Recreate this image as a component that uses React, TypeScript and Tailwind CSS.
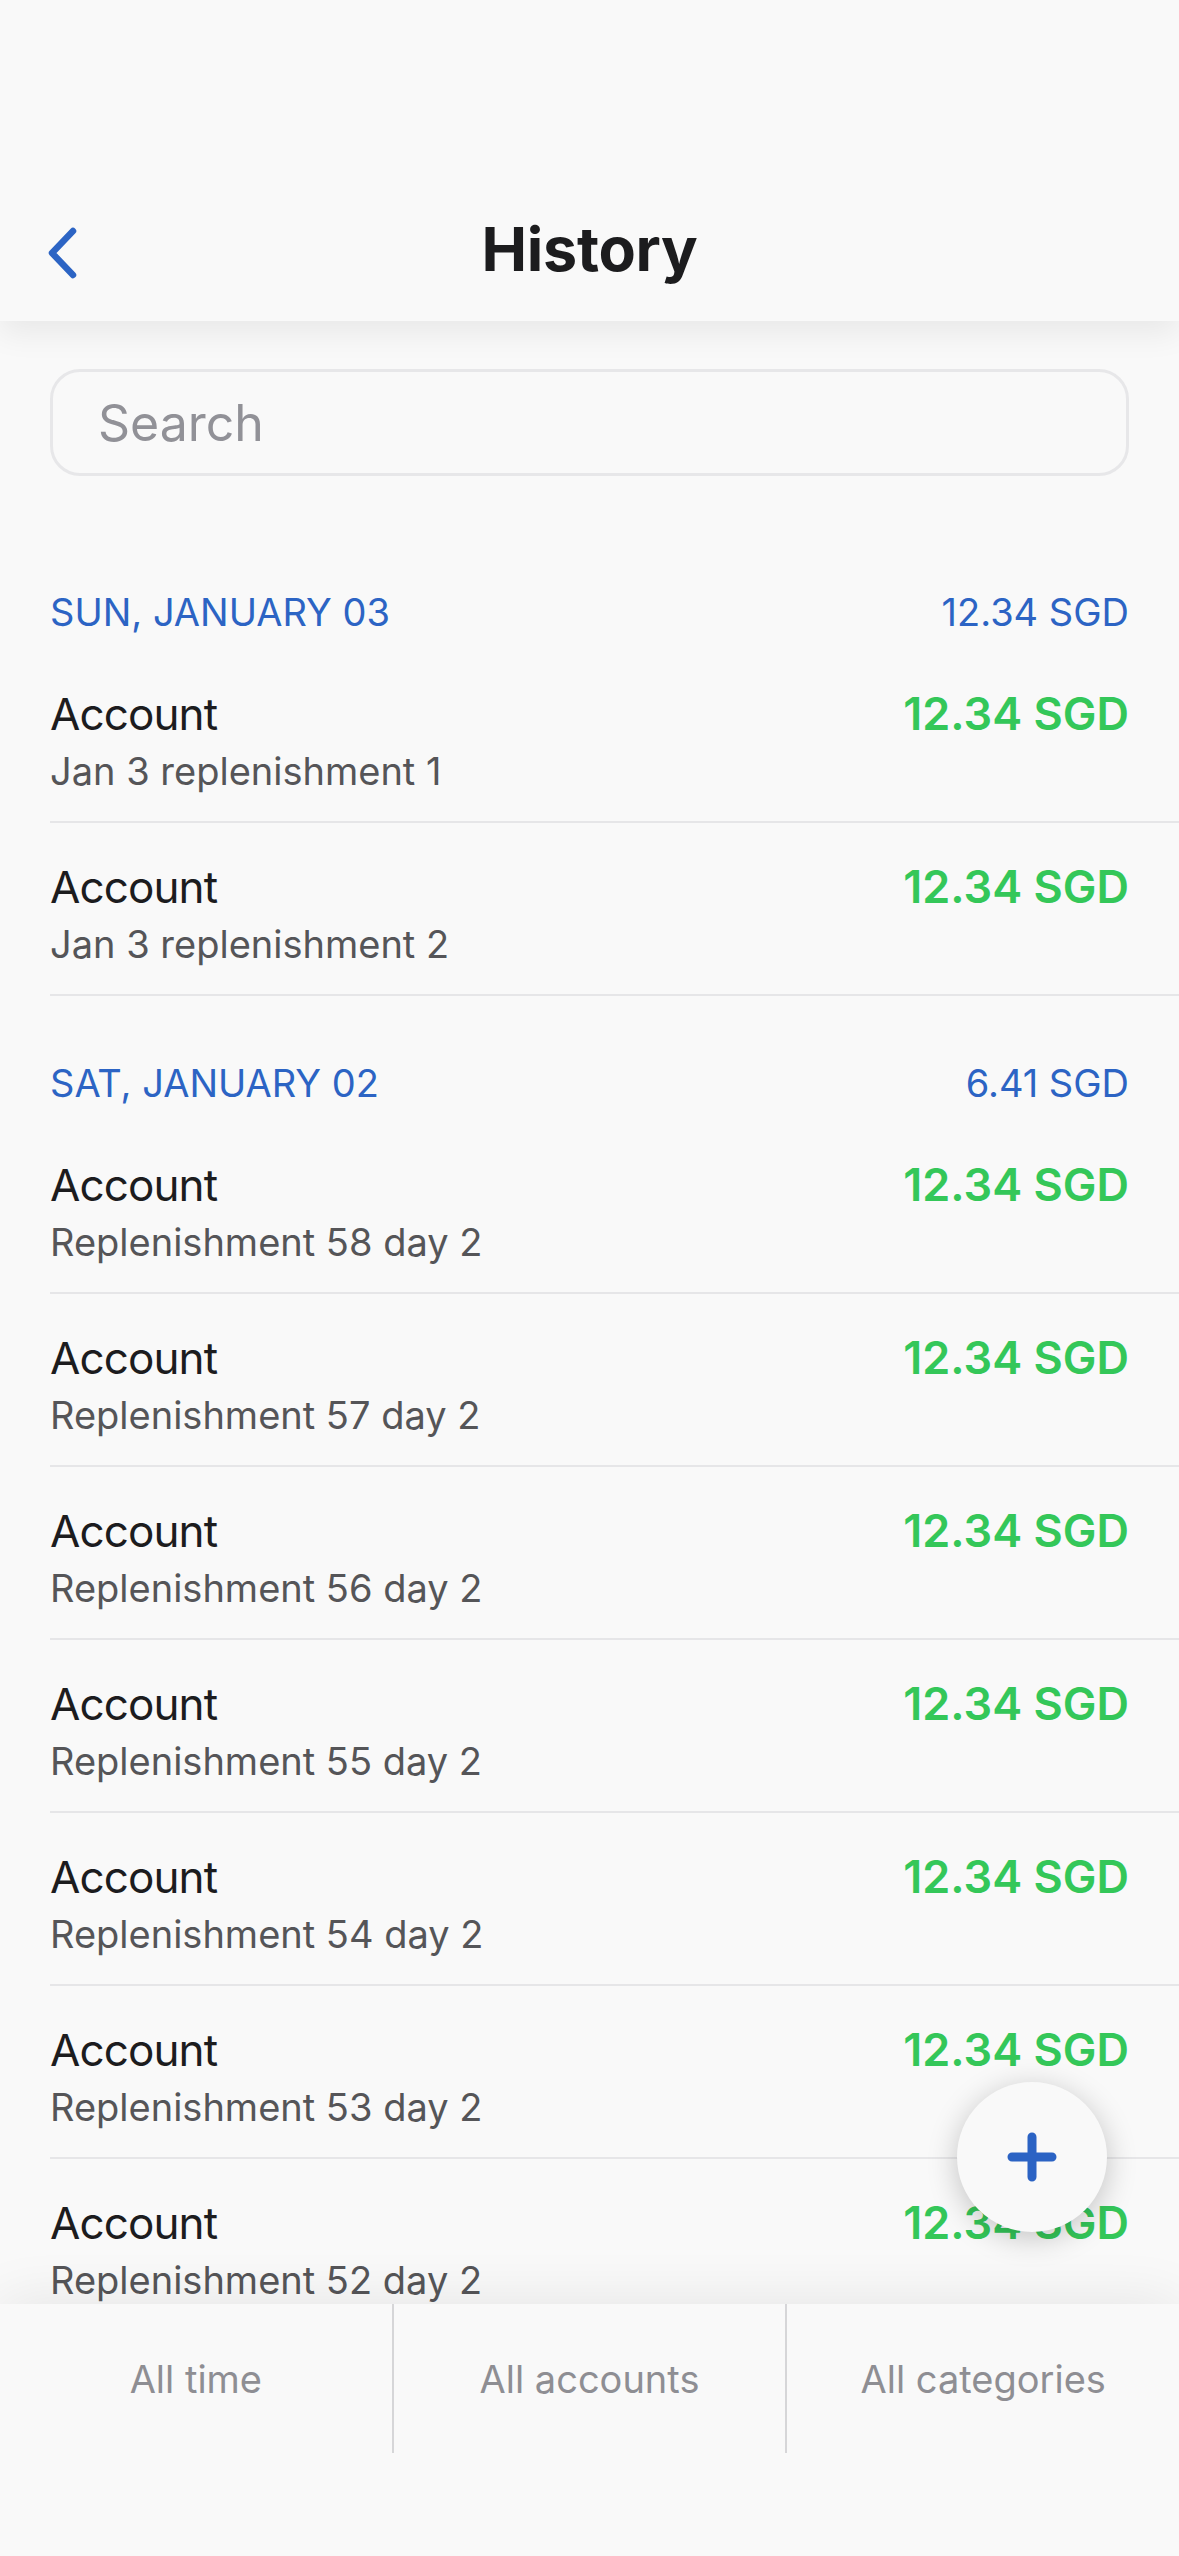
type Entry = {
  account: string
  note: string
  amount: string
}

type Section = {
  date: string
  total: string
  entries: Entry[]
}

const sections: Section[] = [
  {
    date: "SUN, JANUARY 03",
    total: "12.34 SGD",
    entries: [
      { account: "Account", note: "Jan 3 replenishment 1", amount: "12.34 SGD" },
      { account: "Account", note: "Jan 3 replenishment 2", amount: "12.34 SGD" },
    ],
  },
  {
    date: "SAT, JANUARY 02",
    total: "6.41 SGD",
    entries: [58, 57, 56, 55, 54, 53, 52, 51, 50].map((n) => ({
      account: "Account",
      note: `Replenishment ${n} day 2`,
      amount: "12.34 SGD",
    })),
  },
]

const filters = ["All time", "All accounts", "All categories"]

function Row({ entry }: { entry: Entry }) {
  return (
    <div className="ml-[50px] border-b-2 border-[#e6e6e8] pt-[37px] pb-[27px] pr-[50px]">
      <div className="flex items-start justify-between">
        <div className="flex flex-col gap-[7px]">
          <span className="text-[44px] leading-[54px] tracking-[-0.9px] text-[#1c1c1e]">{entry.account}</span>
          <span className="text-[38px] leading-[46px] text-[#555558]">{entry.note}</span>
        </div>
        <span className="text-[45px] font-semibold leading-[54px] text-[#34c759]">{entry.amount}</span>
      </div>
    </div>
  )
}

export default function App() {
  return (
    <div className="relative flex h-[2556px] w-[1179px] flex-col overflow-hidden bg-[#f9f9f9] font-['Inter','Noto_Sans',sans-serif]">
      {/* nav bar */}
      <div className="relative z-10 h-[321px] shrink-0 bg-[#f9f9f9] pt-[177px] shadow-[0_12px_30px_rgba(0,0,0,0.07)]">
        <div className="relative flex h-[144px] items-center justify-center">
          <svg
            className="absolute left-[44px] top-[50px]"
            width="36"
            height="52"
            viewBox="0 0 36 52"
          >
            <path
              d="M29 4 L8 26 L29 48"
              fill="none"
              stroke="#2c64c4"
              strokeWidth="6.5"
              strokeLinecap="round"
              strokeLinejoin="round"
            />
          </svg>
          <h1 className="text-[61px] font-bold leading-[72px] tracking-[-0.3px] text-[#1c1c1e]">History</h1>
        </div>
      </div>

      {/* list */}
      <div className="min-h-0 flex-1 overflow-hidden">
        <div className="mx-[50px] mt-[48px] mb-[49px] flex h-[107px] items-center rounded-[30px] border-[3px] border-[#e7e7e9] px-[45px]">
          <span className="text-[50px] leading-[60px] text-[#919197]">Search</span>
        </div>

        {sections.map((s) => (
          <div key={s.date} className="pt-[63px]">
            <div className="mb-[14px] flex h-[48px] items-center justify-between px-[50px] text-[38px] leading-[48px] text-[#2c64c4]">
              <span>{s.date}</span>
              <span>{s.total}</span>
            </div>
            {s.entries.map((e, i) => (
              <Row key={i} entry={e} />
            ))}
          </div>
        ))}
      </div>

      {/* filter bar */}
      <div className="relative z-10 flex h-[149px] shrink-0 bg-[#f9f9f9] shadow-[0_0_60px_rgba(0,0,0,0.09)]">
        {filters.map((f, i) => (
          <div
            key={f}
            className={
              i === 0
                ? "flex flex-1 items-center justify-center"
                : "flex flex-1 items-center justify-center border-l-2 border-[#d6d6d8]"
            }
          >
            <span className="text-[38px] leading-[46px] text-[#8e8e93]">{f}</span>
          </div>
        ))}
      </div>
      <div className="relative z-20 h-[103px] shrink-0 bg-[#f9f9f9]" />

      {/* add button */}
      <button
        type="button"
        className="absolute right-[72px] bottom-[324px] z-30 flex h-[150px] w-[150px] items-center justify-center rounded-full bg-[#f9f9f9] shadow-[0_6px_30px_rgba(0,0,0,0.22)]"
      >
        <svg width="50" height="50" viewBox="0 0 50 50">
          <path d="M25 5v40M5 25h40" stroke="#2b63c4" strokeWidth="9" strokeLinecap="round" />
        </svg>
      </button>
    </div>
  )
}
